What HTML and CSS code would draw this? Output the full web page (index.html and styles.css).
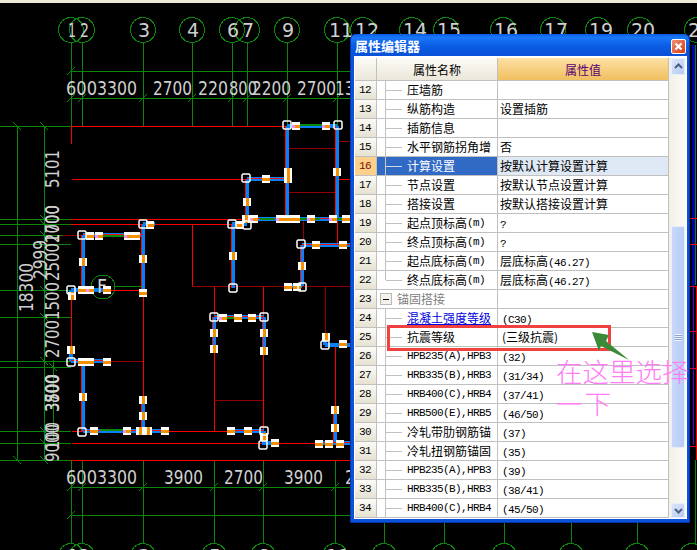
FILE: index.html
```html
<!DOCTYPE html>
<html lang="zh">
<head>
<meta charset="utf-8">
<title>属性编辑器</title>
<link rel="stylesheet" href="styles.css">
</head>
<body>
<div class="topstrip"></div>
<svg class="cad" viewBox="0 3 697 547" width="697" height="547">
<defs>
  <g id="mh"><rect class="wh" x="-4" y="-4" width="8" height="8"/><rect class="or" x="-4" y="-1" width="8" height="3"/></g>
  <g id="mv"><rect class="wh" x="-4" y="-4" width="8" height="8"/><rect class="or" x="-1" y="-4" width="3" height="8"/></g>
  <g id="mp"><rect class="wh" x="-4" y="-4" width="8" height="8"/><rect class="pk" x="-4" y="-1" width="3" height="3"/><rect class="or" x="-1" y="-1" width="5" height="3"/></g>
  <path id="c" class="corner" d="M-3-4H3L4-3V3L3 4H-3L-4 3V-3Z"/>
  <path id="tf" class="gn" d="M-4 4L4-4"/>
  <path id="tb" class="gn" d="M-4-4L4 4"/>
</defs>

<!-- grid bubbles -->
<g class="gn crisp">
  <circle cx="71" cy="30" r="12.500"/><circle cx="82" cy="30" r="12.500"/><circle cx="143" cy="30" r="12.500"/><circle cx="192" cy="30" r="12.500"/><circle cx="232" cy="30" r="12.500"/><circle cx="247" cy="30" r="12.500"/><circle cx="287" cy="30" r="12.500"/><circle cx="337" cy="30" r="12.500"/><circle cx="363" cy="30" r="12.500"/><circle cx="412" cy="30" r="12.500"/><circle cx="446" cy="30" r="12.500"/><circle cx="503" cy="30" r="12.500"/><circle cx="553" cy="30" r="12.500"/><circle cx="598" cy="30" r="12.500"/><circle cx="640" cy="30" r="12.500"/><circle cx="697" cy="30" r="12.500"/>
  <circle cx="71" cy="556" r="12.500"/><circle cx="82" cy="556" r="12.500"/><circle cx="143" cy="556" r="12.500"/><circle cx="214" cy="556" r="12.500"/><circle cx="263" cy="556" r="12.500"/><circle cx="335" cy="556" r="12.500"/><circle cx="384" cy="556" r="12.500"/><circle cx="444" cy="556" r="12.500"/><circle cx="504" cy="556" r="12.500"/><circle cx="571" cy="556" r="12.500"/><circle cx="637" cy="556" r="12.500"/><circle cx="692" cy="556" r="12.500"/>
  <!-- vertical grid lines -->
  <path d="M71 43V144M82 43V126M143 43V126M192 43V126M232 43V126M247 43V126M287 43V126M337 43V126"/>
  <path d="M71 460V544M82 460V544M143 460V544M214 460V544M263 460V544M335 460V544"/>
  <path d="M384 523V544M444 523V544M504 523V544M571 523V544M637 523V544"/>
  <!-- dimension lines -->
  <path d="M71 71H350M71 98H350M71 487H350M71 515H350"/>
  <path d="M17 126V460M44 126V460"/>
  <path d="M0 126H71M0 219H71M0 224H71M0 235H71M0 244H71M0 290H71M0 317H71M0 361H71M0 367H71M0 431H71M0 443H71M0 460H71"/>
  <path d="M53 360V440M115 286H143"/>
  <path d="M695 45V285M695 460V545"/>
  <circle cx="103" cy="287" r="12"/>
</g>
<g>
  <use href="#tf" x="71" y="71"/><use href="#tf" x="71" y="98"/><use href="#tf" x="82" y="98"/><use href="#tf" x="143" y="98"/><use href="#tf" x="192" y="98"/><use href="#tf" x="232" y="98"/><use href="#tf" x="247" y="98"/><use href="#tf" x="287" y="98"/><use href="#tf" x="337" y="98"/>
  <use href="#tf" x="71" y="487"/><use href="#tf" x="82" y="487"/><use href="#tf" x="143" y="487"/><use href="#tf" x="214" y="487"/><use href="#tf" x="263" y="487"/><use href="#tf" x="335" y="487"/><use href="#tf" x="71" y="515"/>
  <use href="#tb" x="17" y="126"/><use href="#tb" x="44" y="126"/><use href="#tb" x="44" y="219"/><use href="#tb" x="44" y="224"/><use href="#tb" x="44" y="235"/><use href="#tb" x="44" y="290"/><use href="#tb" x="44" y="317"/><use href="#tb" x="44" y="361"/><use href="#tb" x="53" y="367"/><use href="#tb" x="44" y="431"/><use href="#tb" x="44" y="443"/><use href="#tb" x="17" y="460"/><use href="#tb" x="44" y="460"/>
</g>

<!-- walls -->
<g class="rd crisp">
  <path d="M71 126H290M71 126V144M72 179H245M71 219H245M71 224H245M192 224V286M72 431H264M72 443H350M71 460H350M100 290H143"/>
  <path d="M143 290V431M214 286V431M263 286V431M71 290V361M335 345V408M337 219V245M337 245H350M337 179H350"/>
</g>
<g class="dr crisp">
  <path d="M287 148H337M287 192H337M192 286H350M63 235H82M108 361H143M214 400H263M303 219V240M325 286V335M337 141H350"/>
</g>

<!-- beams -->
<g class="bm crisp">
  <path d="M287 126V219M337 126V219M287 126H337M247 179H287M247 179V219M247 219H350"/>
  <path d="M233 224V288M232 224H247M143 224H155M143 224V290M83 235H143M83 235V290"/>
  <path d="M302 245H350M302 245V286M285 286H302M71 290H108M71 290V300"/>
  <path d="M214 317H264M214 317V351M264 317V351"/>
  <path d="M71 348V361M71 361H108M83 361V431M83 431H165M143 398V431"/>
  <path d="M229 431H264M264 431V445M263 443H277"/>
  <path d="M325 345H350M325 335V345M335 408V443M318 443H350"/>
</g>
<g class="rt crisp">
  <path d="M285 126V219M335 126V219M247 178H287M245 179V219M247 218H350M231 224V288M141 224V290M83 234H143M81 235V290M302 244H350M300 245V286M214 316H264M212 317V351M262 317V351M71 360H108M81 361V431M83 430H165M141 398V431M229 430H264M318 442H350M333 408V443"/>
</g>
<g class="gb crisp">
  <path d="M295 125H330M95 236H125M100 430H125M225 318H240M260 219H275M300 219H320M330 219H350"/>
</g>
<g>
  <use href="#mp" x="296" y="126"/><use href="#mp" x="326" y="126"/><use href="#mv" x="288" y="172"/><use href="#mv" x="337" y="172"/><use href="#mh" x="266" y="179"/><use href="#mv" x="288" y="179"/>
  <use href="#mv" x="247" y="202"/><use href="#mp" x="254" y="219"/><use href="#mp" x="280" y="219"/><use href="#mh" x="288" y="219"/><use href="#mh" x="296" y="219"/><use href="#mp" x="311" y="219"/><use href="#mp" x="333" y="219"/><use href="#mh" x="346" y="219"/>
  <use href="#mv" x="246" y="219"/>
  <use href="#mh" x="240" y="225"/><use href="#mv" x="233" y="256"/><use href="#mh" x="150" y="225"/><use href="#mv" x="143" y="259"/><use href="#mh" x="143" y="293"/>
  <use href="#mh" x="90" y="236"/><use href="#mp" x="99" y="236"/><use href="#mp" x="128" y="236"/><use href="#mh" x="136" y="236"/><use href="#mv" x="83" y="262"/>
  <use href="#mh" x="316" y="245"/><use href="#mh" x="343" y="245"/><use href="#mv" x="302" y="266"/><use href="#mh" x="288" y="287"/><use href="#mh" x="297" y="287"/>
  <use href="#mh" x="82" y="290"/><use href="#mp" x="90" y="290"/><use href="#mh" x="107" y="290"/><use href="#mv" x="72" y="296"/>
  <use href="#mp" x="223" y="318"/><use href="#mh" x="238" y="318"/><use href="#mh" x="252" y="318"/><use href="#mv" x="214" y="333"/><use href="#mv" x="264" y="333"/><use href="#mv" x="214" y="349"/><use href="#mv" x="264" y="351"/>
  <use href="#mv" x="71" y="350"/><use href="#mh" x="82" y="362"/><use href="#mh" x="90" y="362"/><use href="#mh" x="107" y="362"/><use href="#mv" x="83" y="397"/><use href="#mv" x="143" y="400"/><use href="#mv" x="143" y="416"/>
  <use href="#mh" x="94" y="431"/><use href="#mp" x="127" y="431"/><use href="#mh" x="165" y="431"/><use href="#mv" x="140" y="431"/><use href="#mv" x="148" y="431"/>
  <use href="#mh" x="231" y="431"/><use href="#mh" x="248" y="431"/><use href="#mv" x="264" y="437"/><use href="#mh" x="275" y="443"/>
  <use href="#mh" x="343" y="344"/><use href="#mv" x="326" y="337"/><use href="#mv" x="335" y="410"/><use href="#mv" x="335" y="428"/><use href="#mh" x="319" y="444"/><use href="#mh" x="329" y="444"/><use href="#mh" x="340" y="444"/>
  <use href="#c" x="287" y="125"/><use href="#c" x="338" y="125"/><use href="#c" x="246" y="178"/><use href="#c" x="232" y="224"/><use href="#c" x="247" y="225"/><use href="#c" x="143" y="224"/><use href="#c" x="82" y="235"/><use href="#c" x="301" y="244"/><use href="#c" x="71" y="290"/><use href="#c" x="233" y="288"/><use href="#c" x="302" y="287"/>
  <use href="#c" x="214" y="317"/><use href="#c" x="264" y="317"/><use href="#c" x="71" y="362"/><use href="#c" x="325" y="345"/><use href="#c" x="82" y="432"/><use href="#c" x="264" y="431"/><use href="#c" x="263" y="445"/>
</g>

<!-- labels -->
<g class="lbl">
  <text x="68" y="37" textLength="8" lengthAdjust="spacingAndGlyphs">1</text><text x="80" y="37" textLength="9" lengthAdjust="spacingAndGlyphs">2</text>
  <text x="138" y="37">3</text><text x="187" y="37">4</text><text x="227" y="37">6</text><text x="242" y="37">7</text><text x="282" y="37">9</text><text x="329" y="37">11</text>
  <text x="355" y="37">12</text><text x="403" y="37">14</text><text x="437" y="37">15</text><text x="494" y="37">16</text><text x="544" y="37">17</text><text x="589" y="37">19</text><text x="631" y="37">20</text><text x="688" y="37">2</text>

  <text x="66" y="95" textLength="31" lengthAdjust="spacingAndGlyphs">600</text>
  <text x="97" y="95" textLength="40" lengthAdjust="spacingAndGlyphs">3300</text>
  <text x="153" y="95" textLength="39" lengthAdjust="spacingAndGlyphs">2700</text>
  <text x="198" y="95" textLength="30" lengthAdjust="spacingAndGlyphs">220</text>
  <text x="229" y="95" textLength="28" lengthAdjust="spacingAndGlyphs">800</text>
  <text x="252" y="95" textLength="39" lengthAdjust="spacingAndGlyphs">2200</text>
  <text x="297" y="95" textLength="39" lengthAdjust="spacingAndGlyphs">2700</text>
  <text x="335" y="95" textLength="39" lengthAdjust="spacingAndGlyphs">1300</text>

  <text x="66" y="484" textLength="31" lengthAdjust="spacingAndGlyphs">600</text>
  <text x="97" y="484" textLength="40" lengthAdjust="spacingAndGlyphs">3300</text>
  <text x="164" y="484" textLength="39" lengthAdjust="spacingAndGlyphs">3900</text>
  <text x="224" y="484" textLength="39" lengthAdjust="spacingAndGlyphs">2700</text>
  <text x="284" y="484" textLength="39" lengthAdjust="spacingAndGlyphs">3900</text>
  <text x="345" y="484" textLength="39" lengthAdjust="spacingAndGlyphs">2700</text>

  <text x="97" y="293" textLength="10" lengthAdjust="spacingAndGlyphs">F</text>
  <text x="67" y="563">1</text><text x="78" y="563">2</text><text x="138" y="563">3</text><text x="209" y="563">5</text><text x="258" y="563">8</text><text x="326" y="563">11</text>

  <text transform="translate(59 188) rotate(-90)" textLength="38" lengthAdjust="spacingAndGlyphs">5101</text>
  <text transform="translate(33 312) rotate(-90)" textLength="49" lengthAdjust="spacingAndGlyphs">18300</text>
  <text transform="translate(47 279) rotate(-90)" textLength="39" lengthAdjust="spacingAndGlyphs">2999</text>
  <text transform="translate(59 243) rotate(-90)" textLength="38" lengthAdjust="spacingAndGlyphs">1700</text>
  <text transform="translate(59 243) rotate(-90)" textLength="38" lengthAdjust="spacingAndGlyphs">2000</text>
  <text transform="translate(59 281) rotate(-90)" textLength="38" lengthAdjust="spacingAndGlyphs">2500</text>
  <text transform="translate(59 320) rotate(-90)" textLength="38" lengthAdjust="spacingAndGlyphs">1500</text>
  <text transform="translate(59 358) rotate(-90)" textLength="38" lengthAdjust="spacingAndGlyphs">2700</text>
  <text transform="translate(59 412) rotate(-90)" textLength="38" lengthAdjust="spacingAndGlyphs">3500</text>
  <text transform="translate(59 412) rotate(-90)" textLength="38" lengthAdjust="spacingAndGlyphs">3700</text>
  <text transform="translate(59 403) rotate(-90)" textLength="28" lengthAdjust="spacingAndGlyphs">800</text>
  <text transform="translate(59 462) rotate(-90)" textLength="38" lengthAdjust="spacingAndGlyphs">9000</text>
  <text transform="translate(59 450) rotate(-90)" textLength="28" lengthAdjust="spacingAndGlyphs">100</text>
</g>
<g class="crisp">
  <path class="edge-blue" d="M693 45V285"/>
  <path class="edge-red" d="M690 218H697M690 244H697M690 286H697M690 331H697M690 368H697M690 446H697M696 286V460"/>
  <path class="edge-purple" d="M693 285V445"/>
</g>
</svg>

<section class="dialog">
  <header class="title">
    <span class="title-text">属性编辑器</span>
    <span class="close"><svg viewBox="0 0 13 13" width="13" height="13"><path class="close-x" d="M3.500 3.500L9.500 9.500M9.500 3.500L3.500 9.500"/></svg></span>
  </header>
  <div class="client">
    <div class="table">
      <div class="head">
        <div class="hcell"></div>
        <div class="hcell">属性名称</div>
        <div class="hcell hval">属性值</div>
      </div>
      <div class="row"><div class="num">12</div><div class="lead"></div><div class="name">压墙筋</div><div class="val"></div></div>
      <div class="row"><div class="num">13</div><div class="lead"></div><div class="name">纵筋构造</div><div class="val">设置插筋</div></div>
      <div class="row"><div class="num">14</div><div class="lead"></div><div class="name">插筋信息</div><div class="val"></div></div>
      <div class="row"><div class="num">15</div><div class="lead"></div><div class="name">水平钢筋拐角增</div><div class="val">否</div></div>
      <div class="row sel"><div class="num">16</div><div class="lead"></div><div class="name">计算设置</div><div class="val">按默认计算设置计算</div></div>
      <div class="row"><div class="num">17</div><div class="lead"></div><div class="name">节点设置</div><div class="val">按默认节点设置计算</div></div>
      <div class="row"><div class="num">18</div><div class="lead"></div><div class="name">搭接设置</div><div class="val">按默认搭接设置计算</div></div>
      <div class="row"><div class="num">19</div><div class="lead"></div><div class="name">起点顶标高<span class="lat">(m)</span></div><div class="val"><span class="lat">?</span></div></div>
      <div class="row"><div class="num">20</div><div class="lead"></div><div class="name">终点顶标高<span class="lat">(m)</span></div><div class="val"><span class="lat">?</span></div></div>
      <div class="row"><div class="num">21</div><div class="lead"></div><div class="name">起点底标高<span class="lat">(m)</span></div><div class="val">层底标高<span class="lat">(46.27)</span></div></div>
      <div class="row last"><div class="num">22</div><div class="lead"></div><div class="name">终点底标高<span class="lat">(m)</span></div><div class="val">层底标高<span class="lat">(46.27)</span></div></div>
      <div class="row group"><div class="num">23</div><div class="lead"><span class="minus"></span></div><div class="name">锚固搭接</div><div class="val"></div></div>
      <div class="row link"><div class="num">24</div><div class="lead"></div><div class="name"><span class="ul">混凝土强度等级</span></div><div class="val ind"><span class="lat">(C30)</span></div></div>
      <div class="row"><div class="num">25</div><div class="lead"></div><div class="name">抗震等级</div><div class="val ind">(三级抗震)</div></div>
      <div class="row"><div class="num">26</div><div class="lead"></div><div class="name"><span class="lat">HPB235(A),HPB3</span></div><div class="val ind"><span class="lat">(32)</span></div></div>
      <div class="row"><div class="num">27</div><div class="lead"></div><div class="name"><span class="lat">HRB335(B),HRB3</span></div><div class="val ind"><span class="lat">(31/34)</span></div></div>
      <div class="row"><div class="num">28</div><div class="lead"></div><div class="name"><span class="lat">HRB400(C),HRB4</span></div><div class="val ind"><span class="lat">(37/41)</span></div></div>
      <div class="row"><div class="num">29</div><div class="lead"></div><div class="name"><span class="lat">HRB500(E),HRB5</span></div><div class="val ind"><span class="lat">(46/50)</span></div></div>
      <div class="row"><div class="num">30</div><div class="lead"></div><div class="name">冷轧带肋钢筋锚</div><div class="val ind"><span class="lat">(37)</span></div></div>
      <div class="row"><div class="num">31</div><div class="lead"></div><div class="name">冷轧扭钢筋锚固</div><div class="val ind"><span class="lat">(35)</span></div></div>
      <div class="row"><div class="num">32</div><div class="lead"></div><div class="name"><span class="lat">HPB235(A),HPB3</span></div><div class="val ind"><span class="lat">(39)</span></div></div>
      <div class="row"><div class="num">33</div><div class="lead"></div><div class="name"><span class="lat">HRB335(B),HRB3</span></div><div class="val ind"><span class="lat">(38/41)</span></div></div>
      <div class="row"><div class="num">34</div><div class="lead"></div><div class="name"><span class="lat">HRB400(C),HRB4</span></div><div class="val ind"><span class="lat">(45/50)</span></div></div>
    </div>
    <div class="scroll">
      <div class="sbtn"><svg viewBox="0 0 15 17" width="15" height="17"><path class="chev" d="M4 10L7.500 6.500L11 10"/></svg></div>
      <div class="track"><div class="thumb"><span class="grip"></span></div></div>
      <div class="sbtn"><svg viewBox="0 0 15 15" width="15" height="15"><path class="chev" d="M4 6L7.500 9.500L11 6"/></svg></div>
    </div>
  </div>
</section>

<div class="callout-box"></div>
<svg class="callout-arrow" viewBox="0 0 40 30" width="40" height="30"><polygon class="arrow" points="1,1 18,4 15,10 38,29 10,15 8,20"/></svg>
<div class="note"><div>在这里选择</div><div class="note-2">一下</div></div>
</body>
</html>
```
FILE: styles.css
```css
html, body { margin: 0; padding: 0; }
body {
  position: relative;
  width: 697px;
  height: 550px;
  overflow: hidden;
  background: #000;
  font-family: "Noto Sans CJK SC", "Liberation Sans", sans-serif;
  font-size: 12px;
  color: #000;
}
.topstrip { height: 3px; background: #ece9d8; }
.cad { display: block; }

/* CAD drawing */
.crisp { shape-rendering: crispEdges; }
.gn { fill: none; stroke: #0a860a; stroke-width: 1; }
.rd { fill: none; stroke: #ff0000; stroke-width: 1; }
.dr { fill: none; stroke: #900000; stroke-width: 1; }
.bm { fill: none; stroke: #0a80f8; stroke-width: 4; }
.rt { fill: none; stroke: #f01010; stroke-width: 1; }
.gb { fill: none; stroke: #0a8a0a; stroke-width: 2; }
.wh { fill: #fff; shape-rendering: crispEdges; }
.or { fill: #f59000; shape-rendering: crispEdges; }
.pk { fill: #f090f0; shape-rendering: crispEdges; }
.corner { fill: none; stroke: #fff; stroke-width: 1.500; }
.lbl text {
  font-family: "DejaVu Sans", sans-serif;
  font-size: 19px;
  fill: #cfcfcf;
}
.edge-blue { fill: none; stroke: #0000b0; stroke-width: 3; }
.edge-red { fill: none; stroke: #f00000; stroke-width: 1; }
.edge-purple { fill: none; stroke: #6000d0; stroke-width: 1; }

/* dialog window */
.dialog {
  position: absolute;
  left: 350px;
  top: 34px;
  width: 340px;
  height: 489px;
  box-sizing: border-box;
  display: flex;
  flex-direction: column;
  padding: 0 3px 4px 4px;
  background: #0a52dc;
  border-radius: 6px 6px 0 0;
  box-shadow: inset 0 0 0 1px #0635a8;
}
.title {
  flex: none;
  height: 22px;
  display: flex;
  align-items: center;
  justify-content: space-between;
  padding: 0 3px 0 0;
  margin: 0 -2px 0 -3px;
  padding-left: 4px;
  background: linear-gradient(#0a5ae0 0%, #1a78f8 15%, #0a5ce4 55%, #0a50d8 100%);
  border-radius: 6px 6px 0 0;
}
.title-text {
  color: #fff;
  font-weight: 700;
  font-size: 13px;
  line-height: 1;
}
.close {
  width: 13px;
  height: 13px;
  display: block;
  margin-top: 3px;
  background: linear-gradient(135deg, #f09078, #d83a10);
  border: 1px solid #fff;
  border-radius: 2px;
  box-sizing: content-box;
}
.close svg { display: block; }
.close-x { fill: none; stroke: #fff; stroke-width: 2.200; }

.client {
  flex: 1;
  min-height: 0;
  display: flex;
  background: #fff;
  padding: 2px 1px 0 1px;
}
.table { width: 314px; flex: none; }
.head {
  display: grid;
  grid-template-columns: 22px 121px 171px;
  height: 23px;
}
.hcell {
  display: flex;
  align-items: center;
  justify-content: center;
  box-sizing: border-box;
  border-right: 1px solid #c0c0c0;
  border-bottom: 1px solid #c0c0c0;
  background: linear-gradient(#fcfbf7, #ebe7d9);
  font-size: 12px;
}
.hval {
  background: linear-gradient(#fde0a4, #f0c060);
  color: #5a0070;
}
.row {
  display: grid;
  grid-template-columns: 22px 9px 112px 171px;
  height: 19px;
  box-sizing: border-box;
  border-bottom: 1px solid #c0c0c0;
  line-height: 18px;
  white-space: nowrap;
}
.num {
  box-sizing: border-box;
  border-right: 1px solid #c0c0c0;
  background: linear-gradient(#fbfaf5, #e6e2d2);
  padding-left: 4px;
  font-family: "Liberation Mono", monospace;
  font-size: 11px;
  letter-spacing: -0.600px;
}
.lead {
  display: flex;
  align-items: center;
  background: linear-gradient(#c0c0c0, #c0c0c0) right top / 1px 100% no-repeat;
}
.name {
  display: flex;
  align-items: center;
  overflow: hidden;
  box-sizing: border-box;
  border-right: 1px solid #c0c0c0;
}
.name::before {
  content: "";
  flex: none;
  width: 16px;
  height: 1px;
  margin-right: 5px;
  background: #c0c0c0;
}
.val {
  box-sizing: border-box;
  border-right: 1px solid #c0c0c0;
  padding-left: 2px;
  overflow: hidden;
}
.val.ind { padding-left: 4px; }
.lat {
  font-family: "Liberation Mono", monospace;
  font-size: 11px;
  letter-spacing: -0.600px;
}
.ul { text-decoration: underline; color: #0000e0; }

.sel .num { background: #fdd08c; color: #7a1000; }
.sel .lead { background: linear-gradient(#c8c8c8, #c8c8c8) right top / 1px 100% no-repeat, #316ac5; }
.sel .name { background: #316ac5; color: #fff; }
.sel .name::before { background: #d0d8e8; }
.sel .val { background: #dfe8f5; }
.last .lead { background-size: 1px 50%; }
.group .lead { background: none; overflow: visible; }
.group .name { color: #808080; padding-left: 11px; }
.group .name::before { display: none; }
.minus {
  flex: none;
  display: block;
  width: 12px;
  height: 12px;
  box-sizing: border-box;
  margin-left: 3px;
  border: 1px solid #b8b8b8;
  background: linear-gradient(#000, #000) center / 6px 1px no-repeat, #f4f2ea;
}

.scroll {
  flex: none;
  width: 17px;
  box-sizing: border-box;
  height: 460px;
  padding: 0 1px 0 2px;
  display: flex;
  flex-direction: column;
  background: linear-gradient(90deg, #f2f0e6, #fbfaf6);
}
.sbtn {
  flex: none;
  width: 14px;
  overflow: hidden;
  border-radius: 2px;
  background: linear-gradient(135deg, #dfe8fc, #b4c8f0);
  box-shadow: inset 0 0 0 1px #e8eefc;
}
.sbtn svg { display: block; }
.chev { fill: none; stroke: #4d6185; stroke-width: 2; }
.track { flex: 1; padding-top: 151px; padding-bottom: 55px; }
.thumb {
  height: 100%;
  display: flex;
  align-items: center;
  justify-content: center;
  box-sizing: border-box;
  border: 1px solid #e8eefc;
  border-radius: 2px;
  background: linear-gradient(90deg, #c8d8fa, #b8ccf6);
}
.grip {
  display: block;
  width: 7px;
  height: 7px;
  background: repeating-linear-gradient(#f0f4ff 0 1px, #8aa2d8 1px 2px);
}

/* annotation drawn over the dialog */
.callout-box {
  position: absolute;
  left: 387px;
  top: 325px;
  width: 218px;
  height: 20px;
  border: 3px solid #f04040;
}
.callout-arrow {
  position: absolute;
  left: 591px;
  top: 331px;
}
.arrow { fill: #3a8a38; }
.note {
  position: absolute;
  left: 556px;
  top: 355px;
  color: #ff7cf6;
  font-size: 26.500px;
  line-height: 32px;
  font-weight: 300;
  white-space: nowrap;
}
.note-2 { letter-spacing: 2px; }
```
